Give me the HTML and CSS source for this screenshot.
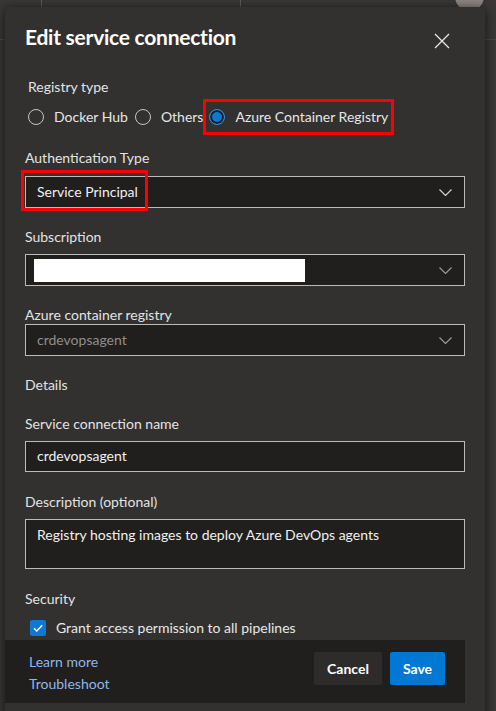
FILE: index.html
```html
<!DOCTYPE html>
<html lang="en">
<head>
<meta charset="utf-8">
<title>Edit service connection</title>
<link rel="stylesheet" href="styles.css">
</head>
<body>
<div class="backdrop">
  <div class="topbar">
    <span class="tab tab-a"></span>
    <span class="tab tab-b"></span>
    <span class="avatar"></span>
  </div>
  <div class="side-line"></div>
</div>

<div class="dialog">
  <div class="dlg-head">
    <h1 class="title">Edit service connection</h1>
    <button class="close" aria-label="Close">
      <svg width="16" height="16" viewBox="0 0 16 16"><path d="M1 1 L15 15 M15 1 L1 15" stroke="#e8e8e8" stroke-width="1.3" fill="none"/></svg>
    </button>
  </div>

  <div class="dlg-body">
    <div class="label lbl-registry">Registry type</div>
    <div class="radios">
      <label class="radio"><span class="circle"></span><span>Docker Hub</span></label>
      <label class="radio"><span class="circle"></span><span>Others</span></label>
      <label class="radio radio-marked"><span class="circle checked"></span><span>Azure Container Registry</span></label>
    </div>

    <div class="label lbl-auth">Authentication Type</div>
    <div class="select">
      <span class="value">Service Principal</span>
      <svg class="chev" width="13" height="7" viewBox="0 0 13 7"><path d="M0.5 0.5 L6.5 6.5 L12.5 0.5" stroke="#d0d0d0" stroke-width="1.2" fill="none"/></svg>
      <span class="mark mark-auth"></span>
    </div>

    <div class="label lbl-sub">Subscription</div>
    <div class="select">
      <span class="redacted"></span>
      <svg class="chev" width="13" height="7" viewBox="0 0 13 7"><path d="M0.5 0.5 L6.5 6.5 L12.5 0.5" stroke="#9a9897" stroke-width="1.2" fill="none"/></svg>
    </div>

    <div class="label lbl-acr">Azure container registry</div>
    <div class="select disabled">
      <span class="value">crdevopsagent</span>
      <svg class="chev" width="13" height="7" viewBox="0 0 13 7"><path d="M0.5 0.5 L6.5 6.5 L12.5 0.5" stroke="#9a9897" stroke-width="1.2" fill="none"/></svg>
    </div>

    <div class="label lbl-details">Details</div>

    <div class="label lbl-name">Service connection name</div>
    <div class="input">crdevopsagent</div>

    <div class="label lbl-desc">Description (optional)</div>
    <div class="textarea">Registry hosting images to deploy Azure DevOps agents</div>

    <div class="label lbl-security">Security</div>
    <label class="check-row">
      <span class="checkbox">
        <svg width="12" height="12" viewBox="0 0 12 12"><path d="M2 6.2 L4.8 9 L10.2 3.2" stroke="#ffffff" stroke-width="1.3" fill="none"/></svg>
      </span>
      <span>Grant access permission to all pipelines</span>
    </label>
  </div>

  <div class="footer">
    <div class="links">
      <a class="link" href="#">Learn more</a>
      <a class="link" href="#">Troubleshoot</a>
    </div>
    <div class="buttons">
      <button class="btn btn-cancel">Cancel</button>
      <button class="btn btn-save">Save</button>
    </div>
  </div>
</div>
</body>
</html>
```

FILE: styles.css
```css
* { box-sizing: border-box; }

html, body {
  margin: 0;
  padding: 0;
  width: 496px;
  height: 711px;
  overflow: hidden;
}

body {
  background: #3a3938;
  font-family: "Lato", "Liberation Sans", sans-serif;
  font-size: 14px;
  line-height: 20px;
  color: #e6e6e6;
  position: relative;
}

/* page behind the dialog */
.backdrop {
  height: 711px;
  background: #393837;
}
.topbar {
  height: 40px;
  border-bottom: 1px solid #4a4948;
  position: relative;
}
.tab {
  position: absolute;
  top: 0;
  width: 1px;
  height: 12px;
  background: #5c5b5a;
}
.tab-a { left: 41px; }
.tab-b { left: 240px; }
.avatar {
  position: absolute;
  right: 12px;
  top: -18px;
  width: 29px;
  height: 29px;
  border-radius: 50%;
  background: #8d8580;
}

/* dialog overlay */
.dialog {
  position: absolute;
  left: 5px;
  top: 7px;
  width: 480px;
  height: 716px;
  background: #323130;
  border-radius: 5px;
  box-shadow: 0 0 8px rgba(0,0,0,0.45), 0 6px 14px rgba(0,0,0,0.3);
  display: flex;
  flex-direction: column;
}

.dlg-head {
  display: flex;
  justify-content: space-between;
  align-items: flex-start;
  padding: 16px 35px 0 20px;
}
.title {
  margin: 0;
  font-size: 21px;
  line-height: 28px;
  font-weight: 700;
  color: #ffffff;
  letter-spacing: -0.25px;
}
.close {
  margin-top: 10px;
  padding: 0;
  border: 0;
  background: transparent;
  width: 16px;
  height: 16px;
  display: block;
}
.close svg { display: block; }

.dlg-body {
  padding: 0 20px;
  display: flex;
  flex-direction: column;
}

.label {
  color: #e3e3e3;
  height: 20px;
}
.lbl-registry { margin: 26px 0 0 3px; }
.radios {
  display: flex;
  align-items: center;
  margin-top: 10px;
  padding-left: 3px;
  height: 20px;
}
.radio {
  display: flex;
  align-items: center;
  gap: 10px;
  margin-right: 7px;
  white-space: nowrap;
}
.circle {
  width: 16px;
  height: 16px;
  border-radius: 50%;
  border: 1px solid #c8c6c4;
  flex: none;
}
.circle.checked {
  border-color: #2b8fe0;
  background: #0f78d4;
  box-shadow: inset 0 0 0 2px #1e1d1c;
  border-width: 1.5px;
}
.radio-marked {
  margin-left: -7px;
  margin-right: 0;
  border: 3px solid #ff0000;
  padding: 5px 3px 5px 3px;
}

.lbl-auth { margin-top: 21px; }
.select {
  position: relative;
  height: 32px;
  margin-top: 8px;
  border: 1px solid #bdbbb9;
  background: #201f1e;
  display: flex;
  align-items: center;
  padding: 0 11px;
  color: #f0f0f0;
}
.select .value { flex: 1; }
.select .chev {
  position: absolute;
  right: 12px;
  top: 12px;
}
.select.disabled .value { color: #8f8d8b; }

.mark-auth {
  position: absolute;
  left: -5px;
  top: -7px;
  width: 127px;
  height: 41px;
  border: 3px solid #ff0000;
}

.lbl-sub { margin-top: 19px; }
.lbl-sub + .select { margin-top: 7px; }
.redacted {
  display: block;
  margin-left: -3px;
  width: 271px;
  height: 23px;
  background: #ffffff;
}

.lbl-acr { margin-top: 19px; }
.lbl-acr + .select { margin-top: -1px; }

.lbl-details { margin-top: 19px; }
.lbl-name { margin-top: 19px; }
.input {
  margin-top: 7px;
  height: 31px;
  border: 1px solid #bdbbb9;
  background: #201f1e;
  padding: 4px 11px;
  color: #f0f0f0;
}
.lbl-desc { margin-top: 20px; }
.textarea {
  margin-top: 7px;
  height: 50px;
  border: 1px solid #bdbbb9;
  background: #201f1e;
  padding: 5px 11px;
  color: #f0f0f0;
}
.lbl-security { margin-top: 20px; }
.check-row {
  display: flex;
  align-items: center;
  gap: 10px;
  margin-top: 9px;
  padding-left: 5px;
  height: 20px;
  color: #e8e8e8;
}
.checkbox {
  width: 16px;
  height: 16px;
  border-radius: 2px;
  background: #0f78d4;
  display: flex;
  align-items: center;
  justify-content: center;
  flex: none;
}
.checkbox svg { display: block; }

.footer {
  margin-top: 2px;
  margin-right: 20px;
  height: 63px;
  background: #201f1e;
  display: flex;
  justify-content: space-between;
  align-items: flex-start;
  padding: 11px 20px 0 24px;
}
.links {
  display: flex;
  flex-direction: column;
}
.link {
  color: #8fb6ea;
  text-decoration: none;
  line-height: 22px;
}
.buttons {
  display: flex;
  gap: 8px;
  margin-top: 1px;
}
.btn {
  height: 33px;
  border: 0;
  border-radius: 2px;
  font-family: inherit;
  font-size: 14px;
  font-weight: 700;
  color: #ffffff;
  padding: 0 12px;
}
.btn-cancel { background: #2d2c2b; width: 68px; }
.btn-save { background: #0078d4; width: 55px; }
```
